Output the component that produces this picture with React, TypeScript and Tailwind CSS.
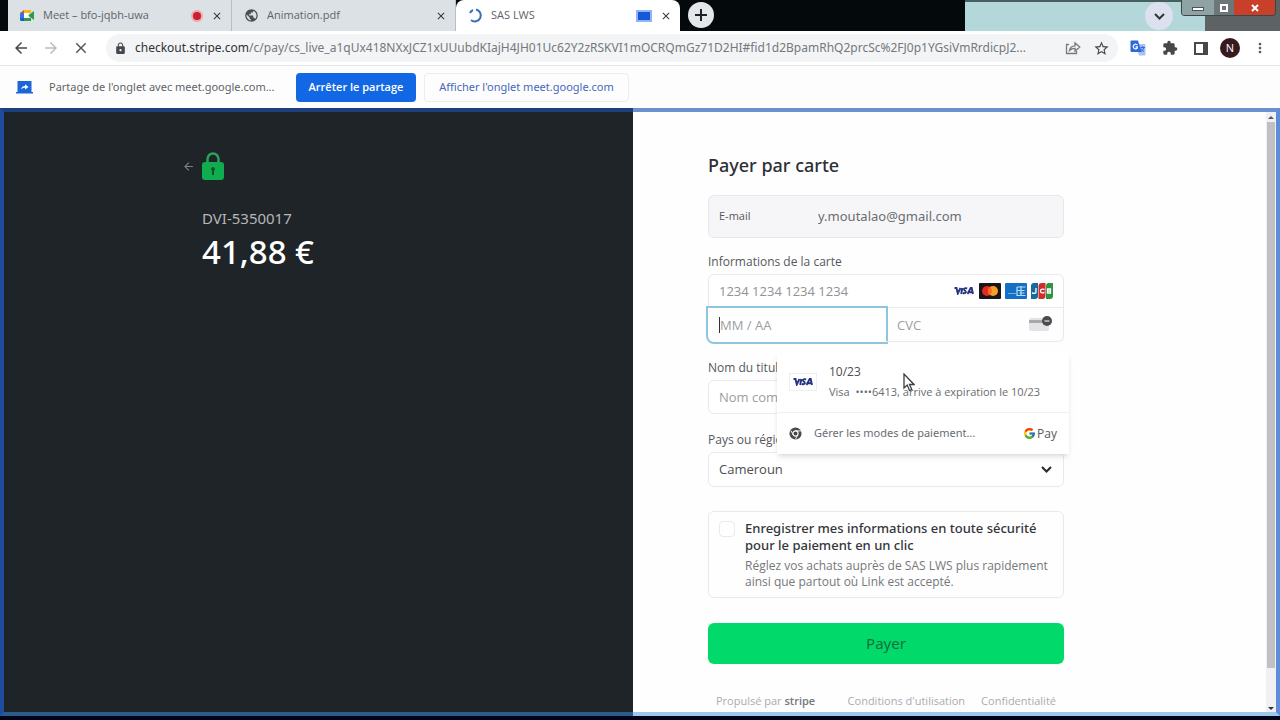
import type { ReactNode } from 'react';
import { FcGoogle } from 'react-icons/fc';
import {
  MdArrowBack,
  MdArrowForward,
  MdClose,
  MdExtension,
  MdLock,
  MdMoreVert,
  MdPublic,
  MdStarBorder,
} from 'react-icons/md';

const url =
  '/c/pay/cs_live_a1qUx418NXxJCZ1xUUubdKIajH4JH01Uc62Y2zRSKVI1mOCRQmGz71D2HI#fid1d2BpamRhQ2prcSc%2FJ0p1YGsiVmRrdicpJ2...';

function MeetIcon() {
  return (
    <svg width="15" height="13" viewBox="0 0 15 13">
      <path d="M4 1h7v3H4z" fill="#f5b912" />
      <path d="M0 4l4-3v3z" fill="#e5483a" />
      <path d="M0 4h4v5H0z" fill="#2d75e8" />
      <path d="M0 9h4v3H1.500Q0 12 0 10.500z" fill="#2059c4" />
      <path d="M4 9h7v3H4zM8 6.500L14 2v9z" fill="#2c9a4b" />
      <path d="M4 4h4.500v5H4z" fill="#fff" />
    </svg>
  );
}

function ShareIcon() {
  return (
    <svg width="16" height="14" viewBox="0 0 16 14" fill="none" stroke="#777b80" strokeWidth="1.300">
      <path d="M4 3.500H1.500v9h10V10" />
      <path d="M4.500 9.500C5 6.500 7 5 10 4.800V2l4.800 4L10 10V7.300C7.500 7.300 6 8 4.500 9.500z" />
    </svg>
  );
}

function TranslateIcon() {
  return (
    <svg width="16" height="16" viewBox="0 0 16 16">
      <path d="M6 4h8.500q1 0 1 1v9.500q0 1-1 1H9z" fill="#a9c2f0" />
      <path d="M1.500.500H8L11.500 12H1.500q-1 0-1-1V1.500q0-1 1-1z" fill="#2f68d8" />
      <path d="M7.500 5.300A2.300 2.300 0 107.300 8V6.800H5.500" fill="none" stroke="#fff" strokeWidth="1.200" />
      <path d="M10.500 7.500H15M12.700 6v1.500M14 7.500q-.5 2.500-3 4M11 8.500q1 2.500 3 3" fill="none" stroke="#2f68d8" />
    </svg>
  );
}

function CastIcon() {
  return (
    <svg width="17" height="13" viewBox="0 0 17 13">
      <path d="M1.500 0h14v11H17v1.500H0V11h1.500z" fill="#1a66d8" />
      <path d="M5 8.500c.5-2.500 2-3.500 4-3.500V3.200L12.500 6 9 8.500V6.800C7.200 6.800 6 7.300 5 8.500z" fill="#fff" />
    </svg>
  );
}

function VisaMark() {
  return (
    <svg width="20" height="8" viewBox="0 0 20 8" fill="none" stroke="#26337f" strokeWidth="1.900">
      <path d="M.5 1h2l1.300 5.500L6.500 1M8.300 1L7.200 7M13.200 1.500c-3-1-4 .8-2.400 2 2 1.200 1 3.300-2 2.500M13.500 7l3.200-6h1L19 7M15 5.200h3.500" />
    </svg>
  );
}

function CardBrands() {
  return (
    <div className="pointer-events-none absolute right-[10px] top-2 flex items-center gap-1">
      <span className="flex h-4 w-[22px] items-center justify-center">
        <VisaMark />
      </span>
      <svg width="22" height="16" viewBox="0 0 22 16">
        <rect width="22" height="16" rx="1" fill="#1b1419" />
        <circle cx="8" cy="8" r="5" fill="#e22a20" />
        <circle cx="14" cy="8" r="5" fill="#f3a02b" />
        <path d="M11 4a5 5 0 010 8 5 5 0 010-8z" fill="#f4691f" />
      </svg>
      <svg width="22" height="16" viewBox="0 0 22 16">
        <rect width="22" height="16" rx="1" fill="#1470c4" />
        <path
          d="M12 4h8.500M12 7.500h7.500M12 4v8.500h8.500M14.500 10h5M16 3v9"
          fill="none"
          stroke="#b9dcf4"
          strokeWidth="1.200"
        />
        <path d="M3 10.500h8" stroke="#6fb0e2" />
      </svg>
      <svg width="22" height="16" viewBox="0 0 22 16">
        <path d="M3 0h4v13q0 3-3 3H0V3q0-3 3-3z" fill="#176b9c" />
        <path d="M11 0h3.500v13q0 3-3 3H7.500V3q0-3 3.500-3z" fill="#d12b2b" />
        <path d="M18 0h4v13q0 3-3 3h-4V3q0-3 3-3z" fill="#2e9440" />
        <path d="M5 5v4q0 2-4 1M13.500 6.500q-4-1-4 1.500t4 1.500M16.500 6h3v4h-3zM16.500 8h3" fill="none" stroke="#fff" strokeWidth="1.300" />
      </svg>
    </div>
  );
}

function Tab({
  icon,
  title,
  active,
  children,
}: {
  icon: ReactNode;
  title: string;
  active?: boolean;
  children?: ReactNode;
}) {
  return (
    <div
      className={`flex h-full w-56 shrink-0 items-center gap-2 pl-3 pr-2 ${
        active ? 'rounded-t-lg bg-white' : 'border-r border-[#b9bec4] bg-[#dce1e6]'
      }`}
    >
      {icon}
      <span className="flex-1 truncate text-[11px] text-[#5f6368]">{title}</span>
      {children}
      <button aria-label="Fermer l'onglet" className="text-[#33363a]">
        <MdClose size={12} />
      </button>
    </div>
  );
}

function TabStrip() {
  return (
    <header className="flex h-[31px] overflow-hidden bg-[#04090c] pl-2">
      <Tab icon={<MeetIcon />} title="Meet – bfo-jqbh-uwa">
        <span className="flex size-3 items-center justify-center rounded-full bg-[#f0a5aa]">
          <span className="size-2 rounded-full bg-[#c8202f]" />
        </span>
      </Tab>
      <Tab icon={<MdPublic size={15} className="text-[#4b4f54]" />} title="Animation.pdf" />
      <Tab
        active
        title="SAS LWS"
        icon={
          <svg width="15" height="15" viewBox="0 0 15 15" fill="none" stroke="#3571b8" strokeWidth="2">
            <path d="M2 5A6 6 0 0 1 5 2M8 1.500A6 6 0 1 1 3 12" />
          </svg>
        }
      >
        <span className="flex h-3 w-4 items-center justify-center bg-[#8fb5f7]">
          <span className="h-2 w-3 bg-[#1559d6]" />
        </span>
      </Tab>
      <button
        aria-label="Nouvel onglet"
        className="ml-2 mt-0.5 flex size-[26px] shrink-0 items-center justify-center rounded-full bg-[#e3e6ea]"
      >
        <svg width="12" height="12" viewBox="0 0 12 12" stroke="#202124" strokeWidth="2">
          <path d="M6 0v12M0 6h12" />
        </svg>
      </button>
      <div className="ml-auto flex h-full w-[315px] bg-[#5d6365]">
        <div className="flex h-full w-60 justify-end border-t-2 border-[#46605f] bg-[#b4d8da] pr-8">
          <button
            aria-label="Rechercher dans les onglets"
            className="flex size-7 items-center justify-center rounded-full bg-[#dce0ef]"
          >
            <svg width="11" height="7" viewBox="0 0 11 7" fill="none" stroke="#33363a" strokeWidth="2">
              <path d="M1 1l4.500 4.500L10 1" />
            </svg>
          </button>
        </div>
        <div className="-ml-6 mr-1 flex h-4 flex-1 overflow-hidden rounded-b border border-t-0 border-[#3c4547]">
          <button aria-label="Réduire" className="flex w-8 items-end justify-center bg-[#8fa3a5] pb-1">
            <span className="h-1 w-3 border border-[#4b5557] bg-white" />
          </button>
          <button aria-label="Agrandir" className="flex w-5 items-center justify-center bg-[#6d7678]">
            <span className="size-2 border-2 border-white" />
          </button>
          <button aria-label="Fermer" className="flex flex-1 items-center justify-center bg-[#c8402a] text-white">
            <svg width="8" height="8" viewBox="0 0 8 8" stroke="#fff" strokeWidth="2">
              <path d="M1 1l6 6M7 1L1 7" />
            </svg>
          </button>
        </div>
      </div>
    </header>
  );
}

function Toolbar() {
  return (
    <nav className="flex h-[35px] items-center gap-3 border-b border-[#e4e5e7] bg-white px-3">
      <button aria-label="Précédent" className="text-[#45484c]">
        <MdArrowBack size={18} />
      </button>
      <button aria-label="Suivant" className="text-[#b9bcc0]">
        <MdArrowForward size={18} />
      </button>
      <button aria-label="Arrêter" className="text-[#55585c]">
        <MdClose size={18} />
      </button>
      <div className="ml-1 flex h-7 min-w-0 flex-1 items-center gap-2 rounded-full bg-[#f3f4f5] px-2">
        <MdLock size={13} className="shrink-0 text-[#45484c]" />
        <span className="flex-1 truncate font-['Noto_Sans',sans-serif] text-[12px] text-[#75787c]">
          <span className="text-[#303236]">checkout.stripe.com</span>
          {url}
        </span>
        <button aria-label="Partager">
          <ShareIcon />
        </button>
        <button aria-label="Ajouter aux favoris" className="ml-1 text-[#45484c]">
          <MdStarBorder size={17} />
        </button>
      </div>
      <button aria-label="Traduire">
        <TranslateIcon />
      </button>
      <button aria-label="Extensions" className="ml-1 text-[#45484c]">
        <MdExtension size={16} />
      </button>
      <button aria-label="Panneau latéral" className="ml-1">
        <svg width="14" height="13" viewBox="0 0 14 13">
          <path d="M1 1h12v11H1z" fill="none" stroke="#45484c" strokeWidth="2" />
          <path d="M9 1h4v11H9z" fill="#45484c" />
        </svg>
      </button>
      <button
        aria-label="Profil"
        className="flex size-5 items-center justify-center rounded-full bg-[#38191e] text-[11px] text-white"
      >
        N
      </button>
      <button aria-label="Menu" className="text-[#55585c]">
        <MdMoreVert size={16} />
      </button>
    </nav>
  );
}

function ShareBar() {
  return (
    <div className="flex h-[42px] items-center bg-[#fdfdfe] px-4 font-['Noto_Sans',sans-serif] text-[11px]">
      <CastIcon />
      <p className="ml-4 w-[247px] whitespace-nowrap text-[#5f6368]">Partage de l'onglet avec meet.google.com...</p>
      <button className="h-[29px] w-[120px] rounded-sm bg-[#1267e4] font-['Open_Sans',sans-serif] font-semibold text-white">
        Arrêter le partage
      </button>
      <button className="ml-2 h-[29px] w-[205px] rounded-sm border border-[#ececf0] text-[#4767bd]">
        Afficher l'onglet meet.google.com
      </button>
    </div>
  );
}

function Summary() {
  return (
    <section className="flex justify-end border-4 border-r-0 border-b-[#2c5c8a] border-l-[#1f4c9e] border-t-[#1d3f7c] bg-[#1f2428] pr-[75px] pt-10">
      <div className="w-[356px] font-['Noto_Sans',sans-serif]">
        <div className="-ml-5 flex items-center gap-[7px]">
          <button aria-label="Retour" className="text-[#7d8286]">
            <MdArrowBack size={13} />
          </button>
          <svg width="22" height="28" viewBox="0 0 22 28">
            <path d="M5.500 12V7a5.500 5.500 0 0111 0v5" fill="none" stroke="#27a35c" strokeWidth="2.500" />
            <rect y="10" width="22" height="18" rx="3" fill="#10ad50" />
            <path d="M11 15a2 2 0 011 3.700V23h-2v-4.300A2 2 0 0111 15z" fill="#0b5429" />
          </svg>
        </div>
        <p className="mt-7 text-[15px] leading-5 text-[#b5b8ba]">DVI-5350017</p>
        <p className="mt-1 text-[33px] font-medium leading-10 text-white">41,88 €</p>
      </div>
    </section>
  );
}

function Autofill() {
  return (
    <div className="absolute left-[69px] top-[78px] z-10 w-[292px] bg-white shadow-md">
      <button className="flex h-[61px] w-full items-center border-b border-[#f0f0f2] text-left">
        <span className="ml-3 flex h-[18px] w-7 items-center justify-center border border-[#efeff2]">
          <VisaMark />
        </span>
        <span className="ml-3 text-[11px] leading-5 text-[#696c70]">
          <span className="block text-[12px] text-[#4b4e52]">10/23</span>
          Visa&nbsp; ••••6413, arrive à expiration le 10/23
        </span>
      </button>
      <button className="flex h-[41px] w-full items-center px-3 text-[11px] text-[#6a6d71]">
        <svg width="13" height="13" viewBox="0 0 14 14">
          <circle cx="7" cy="7" r="6.500" fill="#47494d" />
          <circle cx="7" cy="7" r="2.800" fill="#47494d" stroke="#fff" strokeWidth="1.200" />
          <path d="M7 4.200h6M4.500 8.500L2 3.800M9.500 8.500L7 13" stroke="#fff" />
        </svg>
        <span className="ml-3 font-['Noto_Sans',sans-serif]">Gérer les modes de paiement...</span>
        <span className="ml-auto flex items-center gap-px text-[12px] text-[#55585c]">
          <FcGoogle size={13} />
          Pay
        </span>
      </button>
      <svg className="absolute left-[126px] top-[21px]" width="12" height="19" viewBox="0 0 12 19">
        <path d="M1 1v14l3.200-3 2.300 5.500 2.300-1-2.300-5H11z" fill="#fff" stroke="#3c3e42" strokeWidth="1.300" />
      </svg>
    </div>
  );
}

function PaymentForm() {
  return (
    <section className="border-y-4 border-b-[#9cc8ea] border-t-[#6c8fce] bg-[#fefefe] pl-[75px] pt-[39px]">
      <form className="w-[356px] text-[12px] text-[#55585c]">
        <h1 className="font-['Noto_Sans',sans-serif] text-[18px] font-medium leading-7 text-[#2d3035]">
          Payer par carte
        </h1>

        <div className="mt-4 flex h-[43px] items-center rounded-md border border-[#e8e8eb] bg-[#f6f6f8] px-[10px]">
          <label htmlFor="email" className="w-[99px] text-[11px]">
            E-mail
          </label>
          <input
            id="email"
            type="email"
            readOnly
            defaultValue="y.moutalao@gmail.com"
            className="min-w-0 flex-1 bg-transparent font-['Noto_Sans',sans-serif] text-[13px] text-[#6a6d71] outline-none"
          />
        </div>

        <fieldset className="relative mt-[14px]">
          <legend className="mb-[2px] leading-5">Informations de la carte</legend>
          <div className="relative h-[34px] rounded-t-md border border-[#e9e9ec] bg-white">
            <input
              aria-label="Numéro de carte"
              placeholder="1234 1234 1234 1234"
              className="h-full w-full px-[10px] text-[13px] outline-none placeholder:text-[#8f9296]"
            />
            <CardBrands />
          </div>
          <div className="relative flex h-[34px]">
            <div className="flex w-1/2 items-center rounded-bl-md bg-white px-[11px] outline-2 outline-[#8cc7df]">
              <span className="h-4 w-px bg-[#2d3035]" />
              <input
                aria-label="Date d'expiration"
                placeholder="MM / AA"
                className="h-full min-w-0 flex-1 text-[13px] outline-none placeholder:text-[#9b9ea2]"
              />
            </div>
            <div className="relative w-1/2 rounded-br-md border border-l-0 border-t-0 border-[#e9e9ec]">
              <input
                aria-label="CVC"
                placeholder="CVC"
                className="h-full w-full pl-[11px] text-[13px] outline-none placeholder:text-[#9b9ea2]"
              />
              <svg className="absolute right-[10px] top-2" width="24" height="16" viewBox="0 0 24 16">
                <rect y="2" width="20" height="13" rx="2" fill="#e3e3e5" />
                <path d="M0 4h20v3H0z" fill="#a8a8ac" />
                <circle cx="18" cy="5" r="5" fill="#4b4b50" />
                <path d="M15.500 5h5" stroke="#c9c9cc" strokeWidth="1.500" />
              </svg>
            </div>
            <div className="absolute inset-x-0 -top-[34px]">
              <Autofill />
            </div>
          </div>
        </fieldset>

        <label htmlFor="name" className="mt-4 block leading-5">
          Nom du titulaire
        </label>
        <input
          id="name"
          placeholder="Nom complet"
          className="mt-[2px] block h-[34px] w-full rounded-md border border-[#e9e9ec] bg-white px-[10px] text-[13px] outline-none placeholder:text-[#9b9ea2]"
        />

        <label htmlFor="country" className="mt-4 block leading-5">
          Pays ou région
        </label>
        <div className="relative mt-[2px]">
          <select
            id="country"
            className="block h-[35px] w-full appearance-none rounded-md border border-[#e9e9ec] bg-white px-[10px] text-[13px] text-[#4b4e52] outline-none"
          >
            <option>Cameroun</option>
          </select>
          <svg
            className="pointer-events-none absolute right-3 top-[14px]"
            width="11"
            height="7"
            viewBox="0 0 11 7"
            fill="none"
            stroke="#26282c"
            strokeWidth="2"
          >
            <path d="M1 1l4.500 4.500L10 1" />
          </svg>
        </div>

        <div className="mt-6 flex h-[87px] gap-[10px] rounded-md border border-[#e9e9ec] px-[10px] pt-2">
          <input
            id="save"
            type="checkbox"
            className="mt-px size-4 shrink-0 appearance-none rounded-sm border border-[#e9e9ef] bg-white"
          />
          <div>
            <label
              htmlFor="save"
              className="block font-['Noto_Sans',sans-serif] text-[13px] font-medium leading-[17px] text-[#33363b]"
            >
              Enregistrer mes informations en toute sécurité pour le paiement en un clic
            </label>
            <p className="mt-1 leading-4 text-[#75787c]">
              Réglez vos achats auprès de SAS LWS plus rapidement ainsi que partout où Link est accepté.
            </p>
          </div>
        </div>

        <button
          type="button"
          className="mt-[25px] h-[41px] w-full rounded-md bg-[#02d96b] font-['Noto_Sans',sans-serif] text-[15px] text-[#10713d]"
        >
          Payer
        </button>

        <footer className="mt-[29px] flex justify-between px-2 text-[11px] leading-4 text-[#a9acb0]">
          <p>
            Propulsé par <b className="font-semibold text-[#75787c]">stripe</b>
          </p>
          <div className="flex gap-4">
            <a href="#conditions">Conditions d'utilisation</a>
            <a href="#confidentialite">Confidentialité</a>
          </div>
        </footer>
      </form>
    </section>
  );
}

export default function App() {
  return (
    <div className="flex min-h-screen flex-col bg-[#02051a] pb-1 font-['Open_Sans',sans-serif]">
      <TabStrip />
      <Toolbar />
      <ShareBar />
      <main className="grid flex-1 grid-cols-[1fr_1fr_14px]">
        <Summary />
        <PaymentForm />
        <div className="flex flex-col items-center border-y-4 border-r-4 border-b-[#9cc8ea] border-r-[#5e8cdc] border-t-[#6c8fce] bg-[#f0f0f2]">
          <svg width="8" height="10" viewBox="0 0 8 10">
            <path d="M1 7l3-3 3 3z" fill="#55585c" />
          </svg>
          <div className="h-[546px] w-2 bg-[#c0c0c4]" />
          <svg className="mt-auto" width="8" height="8" viewBox="0 0 8 8">
            <path d="M1 3l3 3 3-3z" fill="#303236" />
          </svg>
        </div>
      </main>
    </div>
  );
}
